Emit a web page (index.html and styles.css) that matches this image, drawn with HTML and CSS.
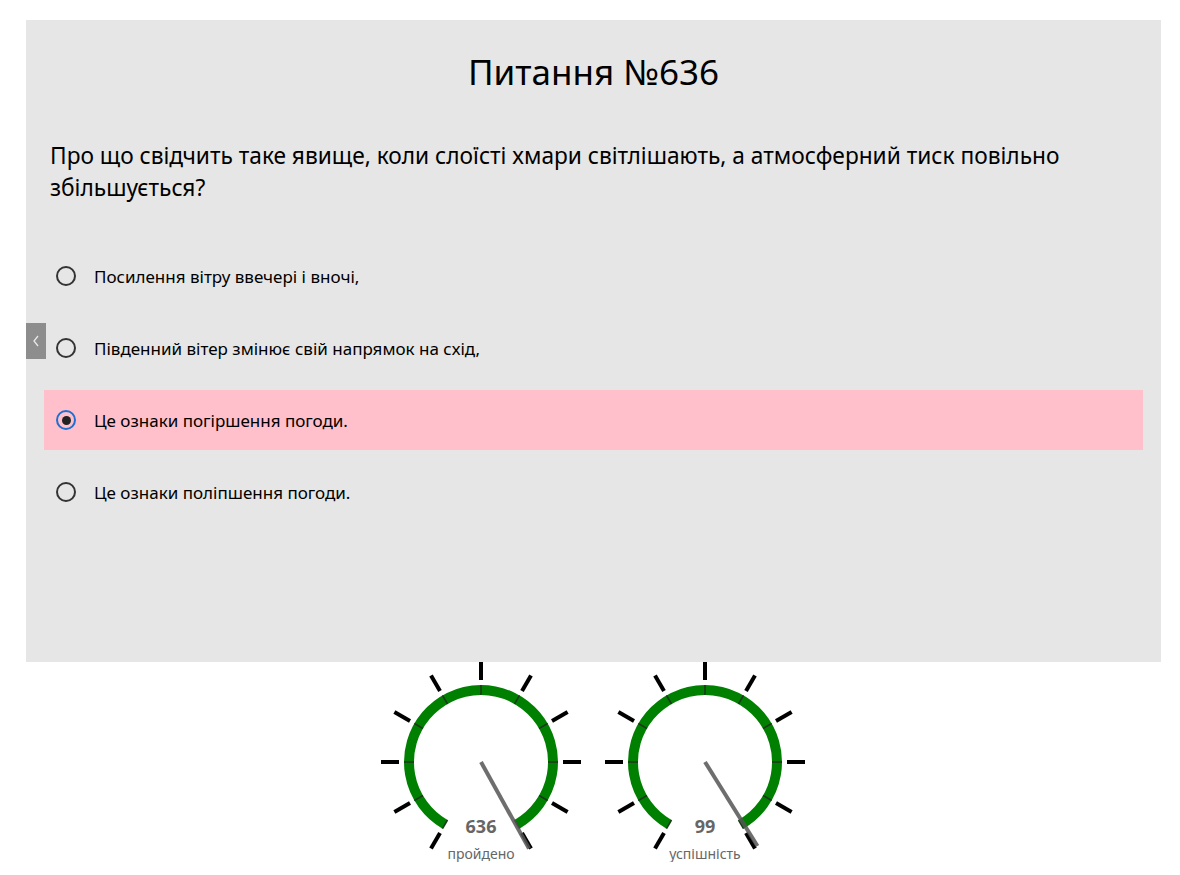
FILE: index.html
```html
<!DOCTYPE html>
<html lang="uk">
<head>
<meta charset="utf-8">
<title>Питання №636</title>
<link rel="stylesheet" href="styles.css">
</head>
<body>
<main class="quiz">
  <button class="nav-prev" aria-label="Назад">
    <svg width="10" height="14" viewBox="0 0 10 14"><path d="M7 2 L3 7 L7 12" fill="none" stroke="#e8e8e8" stroke-width="1.3"/></svg>
  </button>
  <h1 class="title">Питання №636</h1>
  <p class="question">Про що свідчить таке явище, коли слоїсті хмари світлішають, а атмосферний тиск повільно збільшується?</p>
  <ul class="options">
    <li class="option"><span class="radio"></span><span class="label">Посилення вітру ввечері і вночі,</span></li>
    <li class="option"><span class="radio"></span><span class="label">Південний вітер змінює свій напрямок на схід,</span></li>
    <li class="option option--wrong"><span class="radio radio--checked"></span><span class="label">Це ознаки погіршення погоди.</span></li>
    <li class="option"><span class="radio"></span><span class="label">Це ознаки поліпшення погоди.</span></li>
  </ul>
</main>
<section class="gauges">
  <svg class="gauge" width="200" height="200" viewBox="0 0 200 200">
    <g class="ticks">
      <line x1="100" y1="18" x2="100" y2="0" transform="rotate(-150 100 100)"/>
      <line x1="100" y1="18" x2="100" y2="0" transform="rotate(-120 100 100)"/>
      <line x1="100" y1="18" x2="100" y2="0" transform="rotate(-90 100 100)"/>
      <line x1="100" y1="18" x2="100" y2="0" transform="rotate(-60 100 100)"/>
      <line x1="100" y1="18" x2="100" y2="0" transform="rotate(-30 100 100)"/>
      <line x1="100" y1="18" x2="100" y2="0"/>
      <line x1="100" y1="18" x2="100" y2="0" transform="rotate(30 100 100)"/>
      <line x1="100" y1="18" x2="100" y2="0" transform="rotate(60 100 100)"/>
      <line x1="100" y1="18" x2="100" y2="0" transform="rotate(90 100 100)"/>
      <line x1="100" y1="18" x2="100" y2="0" transform="rotate(120 100 100)"/>
      <line x1="100" y1="18" x2="100" y2="0" transform="rotate(150 100 100)"/>
    </g>
    <path class="arc" d="M 64 162.35 A 72 72 0 1 1 136 162.35"/>
    <g class="minor">
      <line x1="100" y1="23" x2="100" y2="33" transform="rotate(-150 100 100)"/>
      <line x1="100" y1="23" x2="100" y2="33" transform="rotate(-120 100 100)"/>
      <line x1="100" y1="23" x2="100" y2="33" transform="rotate(-90 100 100)"/>
      <line x1="100" y1="23" x2="100" y2="33" transform="rotate(-60 100 100)"/>
      <line x1="100" y1="23" x2="100" y2="33" transform="rotate(-30 100 100)"/>
      <line x1="100" y1="23" x2="100" y2="33"/>
      <line x1="100" y1="23" x2="100" y2="33" transform="rotate(30 100 100)"/>
      <line x1="100" y1="23" x2="100" y2="33" transform="rotate(60 100 100)"/>
      <line x1="100" y1="23" x2="100" y2="33" transform="rotate(90 100 100)"/>
      <line x1="100" y1="23" x2="100" y2="33" transform="rotate(120 100 100)"/>
      <line x1="100" y1="23" x2="100" y2="33" transform="rotate(150 100 100)"/>
    </g>
    <line class="needle" x1="100" y1="100" x2="100" y2="1" transform="rotate(151 100 100)"/>
    <text class="value" x="100" y="171">636</text>
    <text class="caption" x="100" y="197">пройдено</text>
  </svg>
  <svg class="gauge" width="200" height="200" viewBox="0 0 200 200">
    <g class="ticks">
      <line x1="100" y1="18" x2="100" y2="0" transform="rotate(-150 100 100)"/>
      <line x1="100" y1="18" x2="100" y2="0" transform="rotate(-120 100 100)"/>
      <line x1="100" y1="18" x2="100" y2="0" transform="rotate(-90 100 100)"/>
      <line x1="100" y1="18" x2="100" y2="0" transform="rotate(-60 100 100)"/>
      <line x1="100" y1="18" x2="100" y2="0" transform="rotate(-30 100 100)"/>
      <line x1="100" y1="18" x2="100" y2="0"/>
      <line x1="100" y1="18" x2="100" y2="0" transform="rotate(30 100 100)"/>
      <line x1="100" y1="18" x2="100" y2="0" transform="rotate(60 100 100)"/>
      <line x1="100" y1="18" x2="100" y2="0" transform="rotate(90 100 100)"/>
      <line x1="100" y1="18" x2="100" y2="0" transform="rotate(120 100 100)"/>
      <line x1="100" y1="18" x2="100" y2="0" transform="rotate(150 100 100)"/>
    </g>
    <path class="arc" d="M 64 162.35 A 72 72 0 1 1 136 162.35"/>
    <g class="minor">
      <line x1="100" y1="23" x2="100" y2="33" transform="rotate(-150 100 100)"/>
      <line x1="100" y1="23" x2="100" y2="33" transform="rotate(-120 100 100)"/>
      <line x1="100" y1="23" x2="100" y2="33" transform="rotate(-90 100 100)"/>
      <line x1="100" y1="23" x2="100" y2="33" transform="rotate(-60 100 100)"/>
      <line x1="100" y1="23" x2="100" y2="33" transform="rotate(-30 100 100)"/>
      <line x1="100" y1="23" x2="100" y2="33"/>
      <line x1="100" y1="23" x2="100" y2="33" transform="rotate(30 100 100)"/>
      <line x1="100" y1="23" x2="100" y2="33" transform="rotate(60 100 100)"/>
      <line x1="100" y1="23" x2="100" y2="33" transform="rotate(90 100 100)"/>
      <line x1="100" y1="23" x2="100" y2="33" transform="rotate(120 100 100)"/>
      <line x1="100" y1="23" x2="100" y2="33" transform="rotate(150 100 100)"/>
    </g>
    <line class="needle" x1="100" y1="100" x2="100" y2="1" transform="rotate(148 100 100)"/>
    <text class="value" x="100" y="171">99</text>
    <text class="caption" x="100" y="197">успішність</text>
  </svg>
</section>
</body>
</html>
```

FILE: styles.css
```css
* { box-sizing: border-box; }

html, body {
  margin: 0;
  padding: 0;
  background: #ffffff;
}

body {
  font-family: "Noto Sans", "Open Sans", "Liberation Sans", sans-serif;
  color: #000;
  padding: 20px 19px 0 26px;
}

.quiz {
  position: relative;
  background: #e6e6e6;
  height: 642px;
  padding: 32px 18px 0 18px;
}

.nav-prev {
  position: absolute;
  left: 0;
  top: 303px;
  width: 20px;
  height: 36px;
  border: 0;
  padding: 0;
  background: #8d8d8d;
  display: flex;
  align-items: center;
  justify-content: center;
}

.title {
  margin: 0;
  text-align: center;
  font-weight: 400;
  font-size: 35px;
  line-height: 40px;
}

.question {
  margin: 48px 0 0 6px;
  font-size: 22.7px;
  line-height: 32px;
}

.options {
  list-style: none;
  margin: 42px 0 0 0;
  padding: 0;
  display: flex;
  flex-direction: column;
  gap: 12px;
}

.option {
  height: 60px;
  display: flex;
  align-items: center;
  padding-left: 12px;
  font-size: 17px;
}

.option--wrong {
  background: #ffc0cb;
}

.radio {
  width: 20px;
  height: 20px;
  border: 2px solid #333;
  border-radius: 50%;
  margin-right: 18px;
  flex: none;
  display: flex;
  align-items: center;
  justify-content: center;
}

.radio--checked {
  border-color: #1f6fd1;
}

.radio--checked::after {
  content: "";
  width: 9px;
  height: 9px;
  border-radius: 50%;
  background: #222;
}

.gauges {
  display: flex;
  justify-content: center;
  gap: 24px;
  padding-right: 1px;
}

.gauge {
  overflow: visible;
  display: block;
}

.ticks line {
  stroke: #000;
  stroke-width: 4;
}

.arc {
  fill: none;
  stroke: #008000;
  stroke-width: 10;
}

.minor line {
  stroke: #1b3a1b;
  stroke-width: 1.6;
}

.needle {
  stroke: #555;
  stroke-opacity: 0.85;
  stroke-width: 4;
}

.value {
  font-family: "Noto Sans", "Open Sans", sans-serif;
  font-weight: 700;
  font-size: 18px;
  fill: #666;
  text-anchor: middle;
}

.caption {
  font-family: "Noto Sans", "Open Sans", sans-serif;
  font-size: 14px;
  fill: #666;
  text-anchor: middle;
}
```
